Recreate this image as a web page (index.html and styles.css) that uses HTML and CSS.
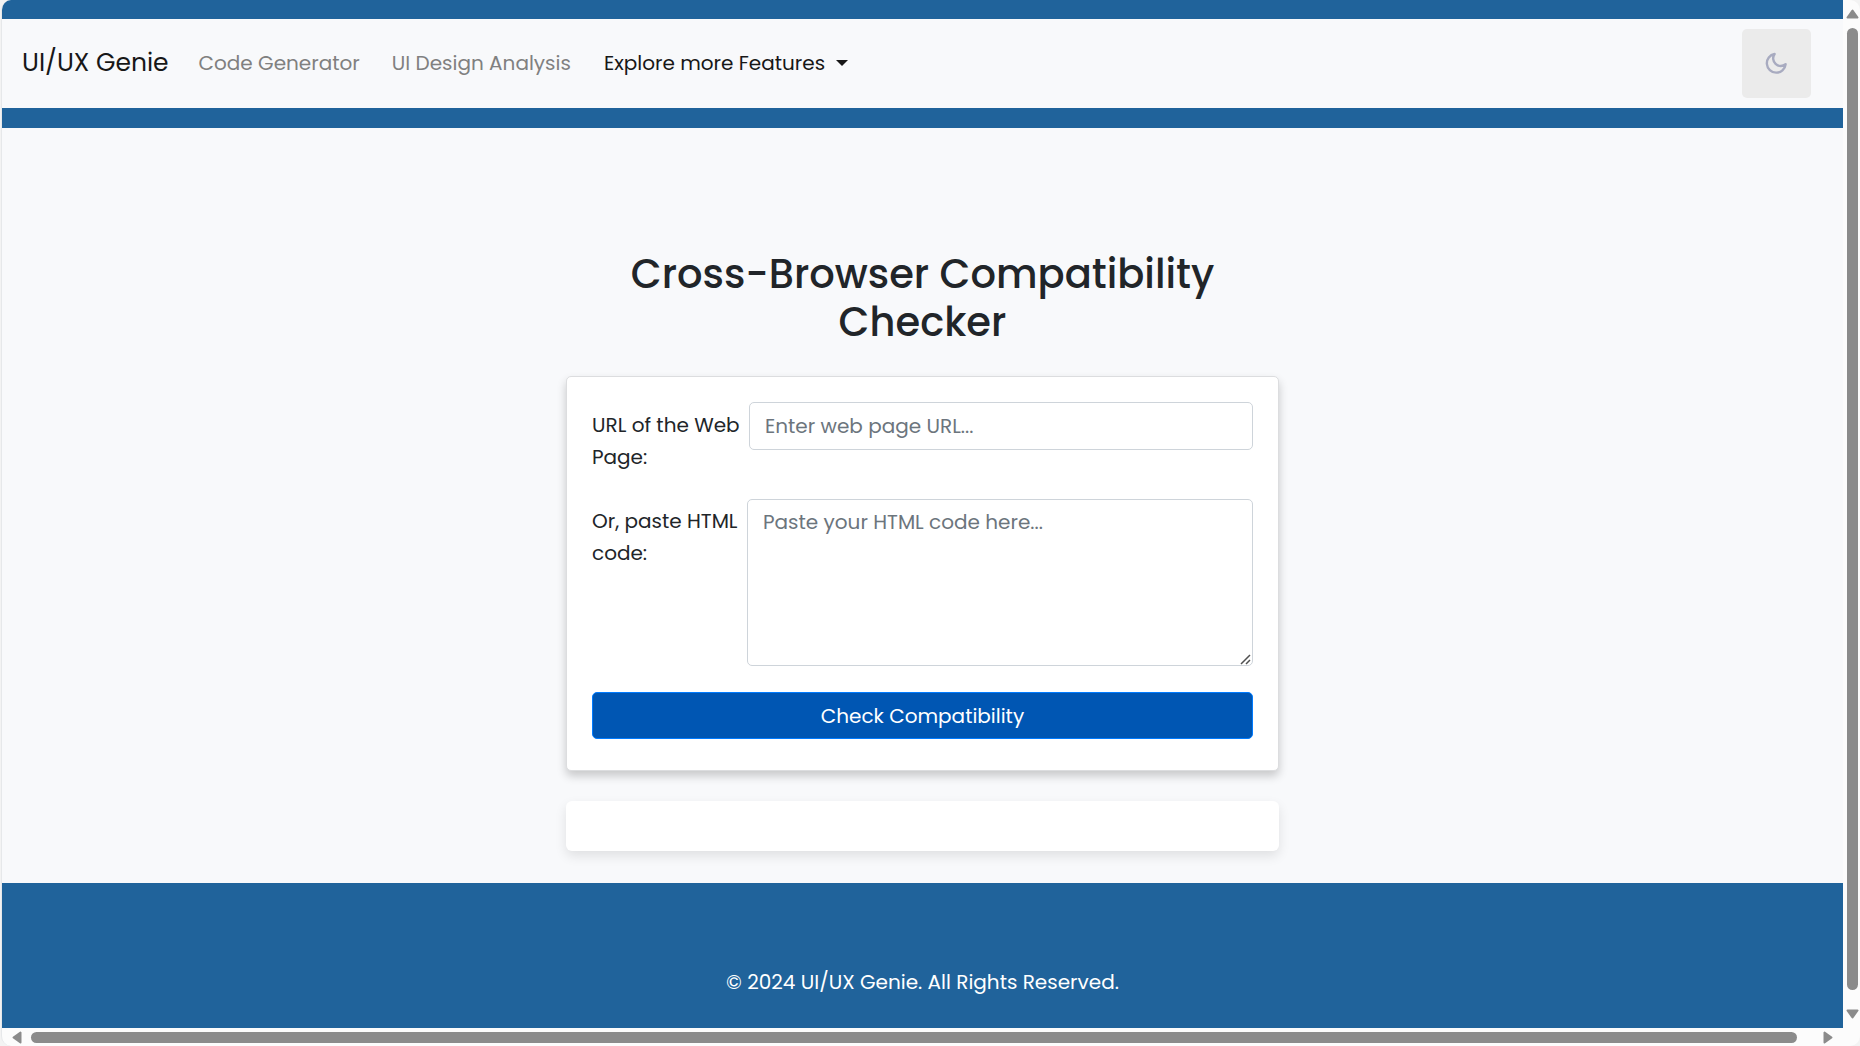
FILE: index.html
```html
<!DOCTYPE html>
<html lang="en">
<head>
<meta charset="utf-8">
<title>UI/UX Genie</title>
<meta name="viewport" content="width=device-width, initial-scale=1">
<link rel="stylesheet" href="styles.css">
</head>
<body>
<div class="window">
  <div class="page">
    <header class="site-header">
      <nav class="navbar">
        <div class="nav-items">
          <a class="brand" href="#">UI/UX Genie</a>
          <a class="nav-link" href="#">Code Generator</a>
          <a class="nav-link" href="#">UI Design Analysis</a>
          <button class="nav-menu" type="button" aria-haspopup="true">Explore more Features</button>
        </div>
        <button class="theme-toggle" type="button" aria-label="Toggle dark mode">
          <svg class="moon" viewBox="0 0 24 24" aria-hidden="true"><path d="M10.6 3A9.4 9.4 0 1 0 21.6 13.3A7.6 7.6 0 0 1 10.6 3Z"/></svg>
        </button>
      </nav>
    </header>
    <main class="content">
      <div class="container">
        <h1 class="title">Cross-Browser Compatibility Checker</h1>
        <form class="card">
          <div class="field">
            <label class="label" for="url">URL of the Web Page:</label>
            <input class="control" id="url" type="text" placeholder="Enter web page URL...">
          </div>
          <div class="field field-area">
            <label class="label" for="code">Or, paste HTML code:</label>
            <textarea class="control control-area" id="code" placeholder="Paste your HTML code here..."></textarea>
          </div>
          <button class="submit" type="button">Check Compatibility</button>
        </form>
        <div class="results"></div>
      </div>
    </main>
    <footer class="footer">© 2024 UI/UX Genie. All Rights Reserved.</footer>
  </div>
  <div class="scroll-y" aria-hidden="true">
    <svg class="arrow-y" viewBox="0 0 13 10"><path d="M6.5 1.5L11.5 8.5H1.5Z"/></svg>
    <div class="thumb-y"></div>
    <svg class="arrow-y" viewBox="0 0 13 10"><path d="M6.5 8.5L11.5 1.5H1.5Z"/></svg>
  </div>
  <div class="scroll-x" aria-hidden="true">
    <svg class="arrow-x" viewBox="0 0 10 13"><path d="M1.5 6.5L8.5 1.5V11.5Z"/></svg>
    <div class="thumb-x"></div>
    <svg class="arrow-x" viewBox="0 0 10 13"><path d="M8.5 6.5L1.5 1.5V11.5Z"/></svg>
  </div>
</div>
</body>
</html>
```
FILE: styles.css
```css
* {
  box-sizing: border-box;
}

body {
  margin: 0;
  background: #f3f3f3;
  color: #212529;
  font: 400 20px/32px Poppins, Inter, sans-serif;
}

button, input, textarea {
  font: inherit;
}

.window {
  display: grid;
  grid-template-columns: minmax(0, 1fr) 17px;
  grid-template-rows: minmax(0, 1fr) 18px;
  height: 100vh;
  margin-left: 1px;
  border-left: 1px solid #e6e8ea;
  border-radius: 10px;
  overflow: hidden;
  background: #fcfcfc;
}

.page {
  display: flex;
  flex-direction: column;
  background: #f8f9fb;
  overflow: hidden;
}

.site-header {
  padding: 19px 0 20px;
  background: #20639b;
}

.navbar {
  display: flex;
  align-items: center;
  padding: 10px 32px 10px 20px;
  background: #f8f9fb;
}

.nav-items {
  display: flex;
  align-items: center;
  padding-bottom: 2px;
}

.brand {
  margin-right: 30px;
  color: #171717;
  font-size: 25px;
  text-decoration: none;
}

.nav-link {
  margin-right: 32px;
  color: #808080;
  text-decoration: none;
}

.nav-menu {
  display: flex;
  align-items: center;
  gap: 11px;
  padding: 0 0 0 1px;
  border: 0;
  background: none;
  color: #171717;
}

.nav-menu::after {
  content: "";
  border: 6px solid transparent;
  border-top-color: #171717;
  border-bottom: 0;
}

.theme-toggle {
  display: grid;
  place-items: center;
  width: 69px;
  height: 69px;
  margin-left: auto;
  padding: 0 1px 1px 0;
  border: 0;
  border-radius: 5px;
  background: #ebebeb;
}

.moon {
  width: 24px;
  height: 24px;
  fill: none;
  stroke: #a8abc0;
  stroke-width: 2.4;
  stroke-linejoin: round;
}

.content {
  flex: 1;
  padding: 122px 20px 0;
}

.container {
  width: 100%;
  max-width: 713px;
  margin: 0 auto;
}

.title {
  margin: 0 0 30px;
  padding: 0 40px;
  font-size: 40px;
  font-weight: 500;
  line-height: 48px;
  text-align: center;
}

.card {
  margin-bottom: 30px;
  padding: 25px 25px 31px;
  border: 1px solid #dcdddf;
  border-radius: 5px;
  background: #fff;
  box-shadow: 0 5px 10px rgba(0, 0, 0, 0.2);
}

.field {
  display: grid;
  grid-template-columns: 157px minmax(0, 1fr);
  align-items: start;
  margin-bottom: 26px;
}

.field-area {
  grid-template-columns: 155px minmax(0, 1fr);
}

.label {
  padding-top: 7px;
}

.field-area .label {
  padding-top: 6px;
}

.control {
  display: block;
  width: 100%;
  height: 48px;
  padding: 7px 15px;
  border: 1px solid #ced4da;
  border-radius: 5px;
  background: #fff;
  color: #495057;
}

.control-area {
  height: 167px;
  padding-top: 6px;
  resize: vertical;
}

.control-area::-webkit-resizer {
  background: url("data:image/svg+xml,%3Csvg xmlns='http://www.w3.org/2000/svg' width='15' height='15'%3E%3Cpath d='M4 14L13 5M9 14L13 10' stroke='%23505050' stroke-width='1.5'/%3E%3C/svg%3E") right bottom no-repeat;
}

.control::placeholder {
  color: #6c757d;
  opacity: 1;
}

.submit {
  display: block;
  width: 100%;
  height: 47px;
  padding: 0;
  border: 1px solid #007bff;
  border-radius: 5px;
  background: #0056b3;
  color: #fff;
}

.results {
  height: 50px;
  border-radius: 6px;
  background: #fff;
  box-shadow: 0 5px 12px rgba(0, 0, 0, 0.1);
}

.footer {
  padding: 83px 20px 30px;
  background: #20639b;
  color: #fff;
  text-align: center;
}

.scroll-y {
  display: flex;
  flex-direction: column;
  align-items: center;
  padding: 9px 0 9px 2px;
}

.thumb-y {
  flex: 1;
  width: 11px;
  margin: 9px 0 19px;
  border-radius: 6px;
  background: #8b8b8b;
}

.scroll-x {
  display: flex;
  align-items: center;
  padding: 0 10px;
}

.thumb-x {
  flex: 1;
  height: 11px;
  margin: 0 26px 0 9px;
  border-radius: 6px;
  background: #8b8b8b;
}

.arrow-y {
  width: 13px;
  height: 10px;
}

.arrow-x {
  width: 10px;
  height: 13px;
}

.arrow-y, .arrow-x {
  fill: #8b8b8b;
  stroke: #8b8b8b;
  stroke-width: 2;
  stroke-linejoin: round;
}
```
